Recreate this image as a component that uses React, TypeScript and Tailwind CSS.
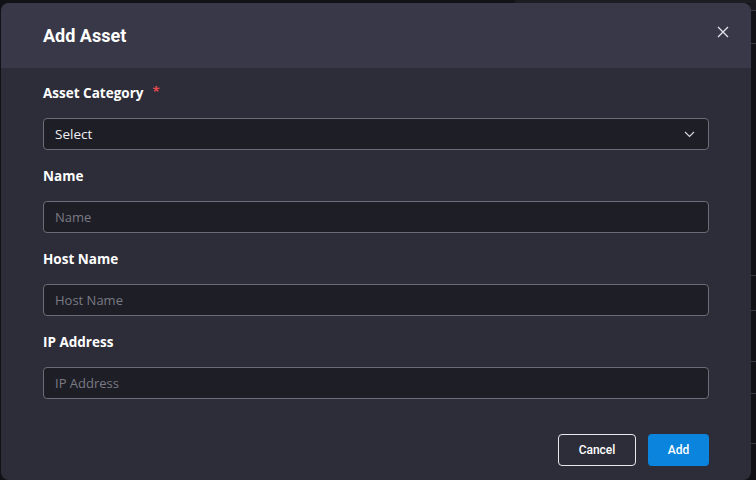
import React, { useState } from "react";

const fields = [
  { label: "Name", placeholder: "Name" },
  { label: "Host Name", placeholder: "Host Name" },
  { label: "IP Address", placeholder: "IP Address" },
];

function Field({ label, children, required }: { label: string; children: React.ReactNode; required?: boolean }) {
  return (
    <div className="flex flex-col">
      <label className="h-5 pt-px flex items-center text-[13.5px] font-bold text-white font-['Open_Sans',sans-serif]">
        {label}
        {required && <span className="ml-[9px] -mt-1 text-[#e5484d] text-[13px]">*</span>}
      </label>
      <div className="mt-[15px]">{children}</div>
    </div>
  );
}

export default function App() {
  const [values, setValues] = useState<Record<string, string>>({});

  return (
    <div className="relative w-[756px] h-[480px] overflow-hidden bg-[#121216]">
      {/* table rows behind the dialog */}
      <div className="absolute right-0 top-0 w-[6px] h-full flex flex-col">
        <div className="h-[11px] bg-[#1a1a20] border-b border-[#3a3a44]" />
        <div className="h-[33px] border-b border-[#3a3a44]" />
        <div className="h-[232px] border-b border-[#3a3a44]" />
        <div className="h-[35px] border-b border-[#3a3a44]" />
        <div className="h-[51px] border-b border-[#3a3a44]" />
        <div className="h-[32px] border-b border-[#3a3a44]" />
        <div className="h-[50px] border-b border-[#3a3a44]" />
      </div>
      <div className="absolute left-[515px] top-0 right-0 h-[3px] bg-[#1c1c22]" />

      <div className="relative ml-px mt-[3px] w-[750px] h-[477px] rounded-[8px] overflow-hidden bg-[#2d2d39] flex flex-col">
        <div className="h-[65px] shrink-0 bg-[#393848] flex items-center justify-between pl-[42px] pr-[22px]">
          <h2 className="text-[18px] font-bold text-white font-['Roboto',sans-serif] -mt-px">Add Asset</h2>
          <button className="text-[#e4e4ea] -mt-2">
            <svg width="12" height="12" viewBox="0 0 12 12" fill="none" stroke="currentColor" strokeWidth="1.3">
              <path d="M1 1L11 11M11 1L1 11" />
            </svg>
          </button>
        </div>

        <div className="flex flex-col gap-4 px-[42px] pt-[15px]">
          <Field label="Asset Category" required>
            <div className="h-8 rounded-[4px] border border-[#6c6c76] bg-[#1e1e26] flex items-center justify-between pl-[11px] pr-[13px]">
              <span className="pt-px text-[13.5px] text-[#f0f0f4] font-['Open_Sans',sans-serif]">Select</span>
              <svg width="11" height="7" viewBox="0 0 11 7" fill="none" stroke="#d4d4dc" strokeWidth="1.2">
                <path d="M1 1L5.5 5.5L10 1" />
              </svg>
            </div>
          </Field>
          {fields.map(f => (
            <Field key={f.label} label={f.label}>
              <input
                className="w-full h-8 rounded-[4px] border border-[#6c6c76] bg-[#1e1e26] px-[11px] text-[13px] text-white placeholder:text-[#7a7a84] outline-none font-['Open_Sans',sans-serif]"
                placeholder={f.placeholder}
                value={values[f.label] ?? ""}
                onChange={e => setValues({ ...values, [f.label]: e.target.value })}
              />
            </Field>
          ))}
        </div>

        <div className="flex justify-end gap-3 px-[42px] mt-[35px]">
          <button className="h-8 w-[78px] rounded-[4px] border border-[#e8e8ec] text-white text-[12px] font-medium font-['Roboto',sans-serif]">
            Cancel
          </button>
          <button className="h-8 w-[61px] rounded-[4px] bg-[#0a84dc] text-white text-[12px] font-medium font-['Roboto',sans-serif]">
            Add
          </button>
        </div>
      </div>
    </div>
  );
}
